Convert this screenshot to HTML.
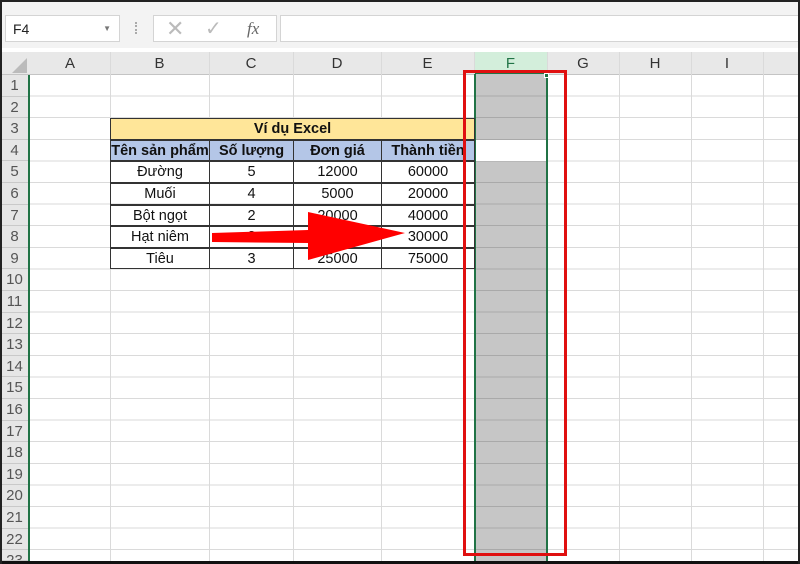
<!DOCTYPE html>
<html style="width:800px;height:564px;overflow:hidden"><head><meta charset="utf-8"><style>
*{margin:0;padding:0;box-sizing:border-box}
body{width:800px;height:564px;overflow:hidden;background:#fff;position:relative;font-family:"Liberation Sans",sans-serif}
.a{position:absolute}
.grid{left:30px;top:75px;width:770px;height:489px;background:repeating-linear-gradient(to bottom,transparent 0,transparent 20.6px,#dadada 20.6px,#dadada 21.6px)}
.vl{position:absolute;top:52px;width:1px;height:512px;background:#dadada}
.ch{position:absolute;top:52px;height:22px;font-size:15px;color:#333;text-align:center;line-height:24px}
.rh{position:absolute;left:0;width:29px;height:21.6px;font-size:15px;color:#555;text-align:center;line-height:22px;border-bottom:1px solid #c9c9c9;background:#e6e6e6}
.c{position:absolute;font-size:14.5px;text-align:center;line-height:21px;height:21.6px;border:1px solid #333;color:#111}
.b{font-weight:bold}
</style></head><body>
<div class="a" style="left:0;top:0;width:800px;height:48px;background:#f3f3f3;border-top:2px solid #222"></div>
<div class="a" style="left:5px;top:15px;width:115px;height:27px;background:#fff;border:1px solid #d4d4d4;font-size:14px;line-height:26px;padding-left:7px;color:#222">F4<span style="position:absolute;right:8px;top:0;font-size:8px;color:#777">▼</span></div>
<div class="a" style="left:135px;top:22px;width:2px;height:12px;border-left:2px dotted #aaa"></div>
<div class="a" style="left:153px;top:15px;width:124px;height:27px;background:#fff;border:1px solid #d4d4d4"></div>
<div class="a" style="left:166px;top:16px;font-size:22px;color:#bbb;line-height:26px">✕</div>
<div class="a" style="left:205px;top:16px;font-size:20px;color:#bbb;line-height:26px">✓</div>
<div class="a" style="left:247px;top:16px;font-size:17px;color:#666;font-style:italic;font-family:'Liberation Serif',serif;line-height:26px">fx</div>
<div class="a" style="left:280px;top:15px;width:520px;height:27px;background:#fff;border:1px solid #d4d4d4"></div>
<div class="a" style="left:0;top:48px;width:800px;height:26px;background:#fff"></div>
<div class="a" style="left:0;top:52px;width:800px;height:23px;background:#e8e8e8;border-bottom:1px solid #c4c4c4"></div>
<div class="a" style="left:474px;top:52px;width:73px;height:22px;background:#d3eedb;border-bottom:2px solid #217346"></div>
<div class="a" style="left:12px;top:58px;width:0;height:0;border-left:15px solid transparent;border-bottom:15px solid #bbb"></div>
<div class="ch" style="left:30px;width:80px">A</div>
<div class="ch" style="left:110px;width:99px">B</div>
<div class="ch" style="left:209px;width:84px">C</div>
<div class="ch" style="left:293px;width:88px">D</div>
<div class="ch" style="left:381px;width:93px">E</div>
<div class="ch" style="left:474px;width:73px;color:#217346">F</div>
<div class="ch" style="left:547px;width:72px">G</div>
<div class="ch" style="left:619px;width:72px">H</div>
<div class="ch" style="left:691px;width:72px">I</div>
<div class="grid a"></div>
<div class="vl" style="left:110px"></div><div class="vl" style="left:209px"></div><div class="vl" style="left:293px"></div><div class="vl" style="left:381px"></div><div class="vl" style="left:474px"></div><div class="vl" style="left:547px"></div><div class="vl" style="left:619px"></div><div class="vl" style="left:691px"></div><div class="vl" style="left:763px"></div>
<div class="a" style="left:0;top:75px;width:30px;height:489px;background:#e6e6e6"></div>
<div class="rh" style="top:75px">1</div><div class="rh" style="top:96.6px">2</div><div class="rh" style="top:118.2px">3</div><div class="rh" style="top:139.8px">4</div><div class="rh" style="top:161.4px">5</div><div class="rh" style="top:183px">6</div><div class="rh" style="top:204.6px">7</div><div class="rh" style="top:226.2px">8</div><div class="rh" style="top:247.8px">9</div><div class="rh" style="top:269.4px">10</div><div class="rh" style="top:291px">11</div><div class="rh" style="top:312.6px">12</div><div class="rh" style="top:334.2px">13</div><div class="rh" style="top:355.8px">14</div><div class="rh" style="top:377.4px">15</div><div class="rh" style="top:399px">16</div><div class="rh" style="top:420.6px">17</div><div class="rh" style="top:442.2px">18</div><div class="rh" style="top:463.8px">19</div><div class="rh" style="top:485.4px">20</div><div class="rh" style="top:507px">21</div><div class="rh" style="top:528.6px">22</div><div class="rh" style="top:550.2px;height:11px;overflow:hidden">23</div>
<div class="a" style="left:28px;top:75px;width:2px;height:489px;background:#217346"></div>
<div class="a" style="left:475px;top:75px;width:71px;height:489px;background:repeating-linear-gradient(to bottom,#c6c6c6 0,#c6c6c6 20.6px,#a9a9a9 20.6px,#a9a9a9 21.6px)"></div>
<div class="a" style="left:475px;top:139.8px;width:71px;height:21.6px;background:#fff"></div>
<div class="a" style="left:474px;top:74px;width:1.5px;height:490px;background:#217346"></div>
<div class="a" style="left:546px;top:74px;width:1.5px;height:490px;background:#217346"></div>
<div class="a" style="left:544px;top:73px;width:5px;height:5px;background:#217346;border:1px solid #fff"></div>
<div class="c b" style="left:110px;top:118.2px;width:365px;background:#ffe699">Ví dụ Excel</div>
<div class="c b" style="left:110px;top:139.8px;width:100px;background:#b4c6e7;white-space:nowrap;overflow:hidden">Tên sản phẩm</div>
<div class="c b" style="left:209px;top:139.8px;width:85px;background:#b4c6e7">Số lượng</div>
<div class="c b" style="left:293px;top:139.8px;width:89px;background:#b4c6e7">Đơn giá</div>
<div class="c b" style="left:381px;top:139.8px;width:94px;background:#b4c6e7;white-space:nowrap;overflow:hidden">Thành tiền</div>
<div class="c" style="left:110px;top:161.4px;width:100px">Đường</div><div class="c" style="left:209px;top:161.4px;width:85px">5</div><div class="c" style="left:293px;top:161.4px;width:89px">12000</div><div class="c" style="left:381px;top:161.4px;width:94px">60000</div>
<div class="c" style="left:110px;top:183px;width:100px">Muối</div><div class="c" style="left:209px;top:183px;width:85px">4</div><div class="c" style="left:293px;top:183px;width:89px">5000</div><div class="c" style="left:381px;top:183px;width:94px">20000</div>
<div class="c" style="left:110px;top:204.6px;width:100px">Bột ngọt</div><div class="c" style="left:209px;top:204.6px;width:85px">2</div><div class="c" style="left:293px;top:204.6px;width:89px">20000</div><div class="c" style="left:381px;top:204.6px;width:94px">40000</div>
<div class="c" style="left:110px;top:226.2px;width:100px">Hạt niêm</div><div class="c" style="left:209px;top:226.2px;width:85px">2</div><div class="c" style="left:293px;top:226.2px;width:89px">15000</div><div class="c" style="left:381px;top:226.2px;width:94px">30000</div>
<div class="c" style="left:110px;top:247.8px;width:100px">Tiêu</div><div class="c" style="left:209px;top:247.8px;width:85px">3</div><div class="c" style="left:293px;top:247.8px;width:89px">25000</div><div class="c" style="left:381px;top:247.8px;width:94px">75000</div>
<svg class="a" style="left:0;top:0" width="800" height="564">
<polygon points="212,233 308,230 308,212 405,233 308,260 308,243 212,242" fill="#f00"/>
<rect x="464.5" y="71.5" width="101" height="483" fill="none" stroke="#e01010" stroke-width="3"/>
</svg>
<div class="a" style="left:0;top:561px;width:800px;height:3px;background:#111"></div>
<div class="a" style="left:0;top:0;width:2px;height:564px;background:#222"></div>
<div class="a" style="left:798px;top:0;width:2px;height:564px;background:#222"></div>
</body></html>
